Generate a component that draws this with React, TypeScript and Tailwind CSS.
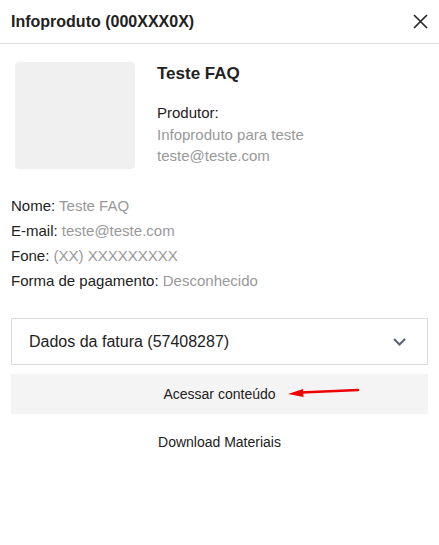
import React from 'react';

const InfoRow: React.FC<{ label: string; value: string }> = ({ label, value }) => (
  <div className="h-[25px] leading-[25px]">
    <span className="text-[#222]">{label}: </span>
    <span className="text-[#999]">{value}</span>
  </div>
);

const App: React.FC = () => {
  return (
    <div className="w-[439px] h-[545px] bg-white text-[14px] text-[#222]" style={{ fontFamily: '"Liberation Sans", Arial, sans-serif' }}>
      <div className="h-[44px] flex items-center justify-between pl-[11px] pr-[11px] border-b border-[#e0e0e0]">
        <span className="text-[16px] font-bold text-[#222]">Infoproduto (000XXX0X)</span>
        <button className="w-[16px] h-[16px] flex items-center justify-center">
          <svg width="15" height="15" viewBox="0 0 15 15" fill="none" stroke="#222" strokeWidth="1.6">
            <path d="M1 1 L14 14 M14 1 L1 14" />
          </svg>
        </button>
      </div>

      <div className="flex pl-[15px] pt-[18px]">
        <div className="w-[120px] h-[107px] rounded-[4px] bg-[#f0f0f0]" />
        <div className="ml-[22px]">
          <div className="text-[17px] font-bold leading-[24px]">Teste FAQ</div>
          <div className="mt-[16px] leading-[21.5px] text-[15px]">
            <div className="text-[#222]">Produtor:</div>
            <div className="text-[#999]">Infoproduto para teste</div>
            <div className="text-[#999]">teste@teste.com</div>
          </div>
        </div>
      </div>

      <div className="pl-[11px] mt-[24px] text-[15px]">
        <InfoRow label="Nome" value="Teste FAQ" />
        <InfoRow label="E-mail" value="teste@teste.com" />
        <InfoRow label="Fone" value="(XX) XXXXXXXXX" />
        <InfoRow label="Forma de pagamento" value="Desconhecido" />
      </div>

      <div className="px-[11px] mt-[25px]">
        <div className="h-[47px] border border-[#dcdcdc] flex items-center justify-between pl-[17px] pr-[21px]">
          <span className="text-[16px] text-[#222]">Dados da fatura (57408287)</span>
          <svg width="13" height="8" viewBox="0 0 13 8" fill="none" stroke="#5b6170" strokeWidth="2">
            <path d="M1 1 L6.5 6.5 L12 1" />
          </svg>
        </div>

        <div className="relative mt-[9px] h-[40px] bg-[#f4f4f4] flex items-center justify-center">
          <span className="text-[#222]">Acessar conteúdo</span>
          <svg className="absolute left-[276px] top-[13px]" width="74" height="10" viewBox="0 0 74 10" fill="none">
            <path d="M14 5.5 L71 3" stroke="#f00000" strokeWidth="2.4" strokeLinecap="round" />
            <path d="M1 7 L16 2 L16.5 10 Z" fill="#f00000" />
          </svg>
        </div>

        <div className="h-[57px] flex items-center justify-center text-[#222]">Download Materiais</div>
      </div>
    </div>
  );
};

export default App;
